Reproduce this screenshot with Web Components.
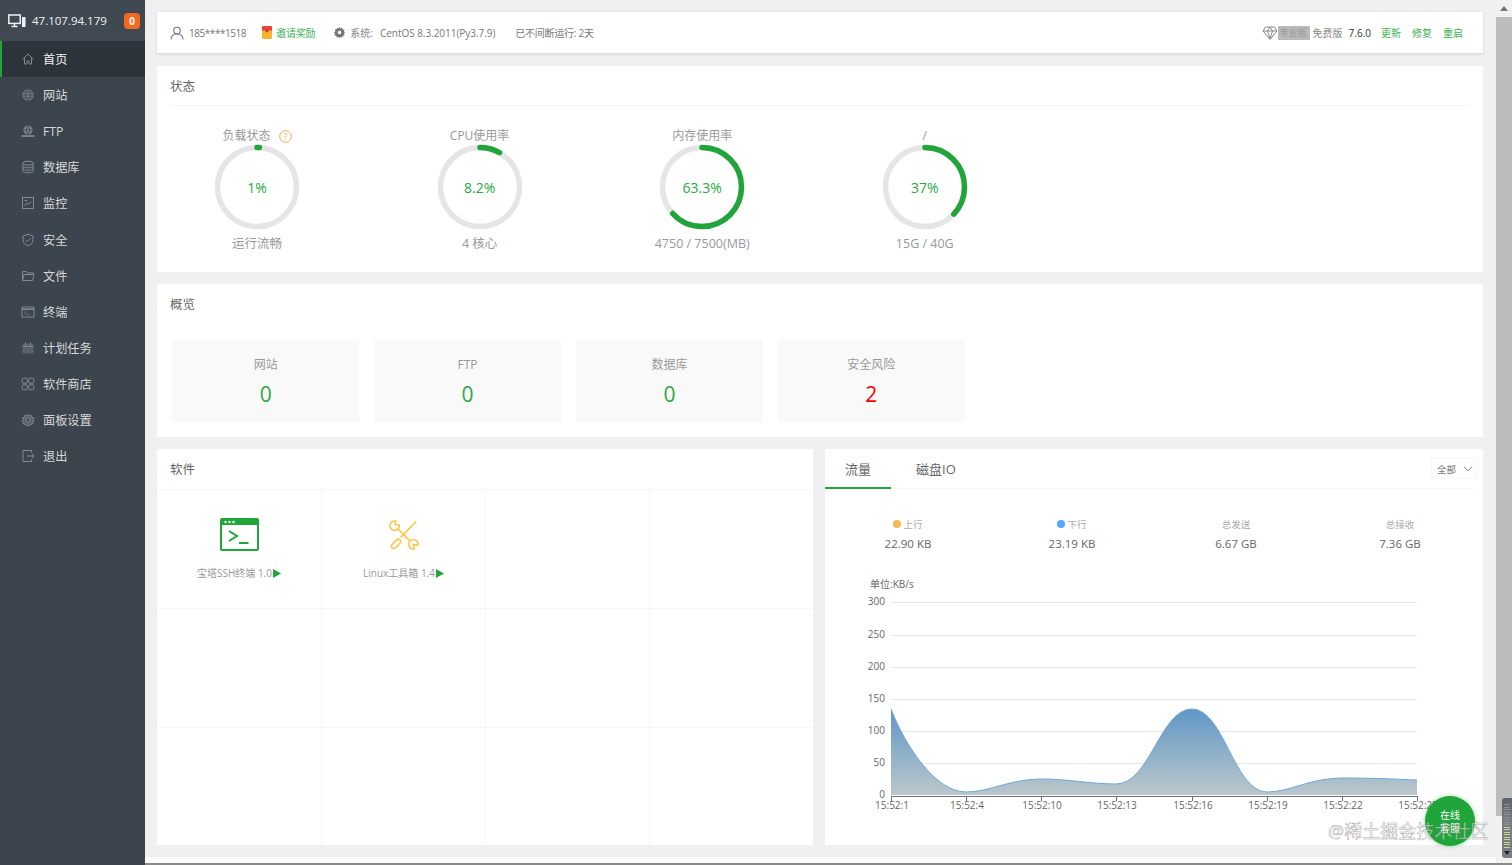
<!DOCTYPE html>
<html lang="zh">
<head>
<meta charset="utf-8">
<title>宝塔面板</title>
<style>
  html, body { margin: 0; height: 100%; overflow: hidden; }
  body {
    display: flex;
    height: 865px;
    background: #f0f0f0;
    font-family: "Open Sans", "Noto Sans CJK SC", sans-serif;
    color: #666;
    position: relative;
  }
</style>
</head>
<body>
<bt-sidebar>
  <bt-nav-item icon="home" active>首页</bt-nav-item>
  <bt-nav-item icon="globe">网站</bt-nav-item>
  <bt-nav-item icon="ftp">FTP</bt-nav-item>
  <bt-nav-item icon="db">数据库</bt-nav-item>
  <bt-nav-item icon="monitor">监控</bt-nav-item>
  <bt-nav-item icon="shield">安全</bt-nav-item>
  <bt-nav-item icon="folder">文件</bt-nav-item>
  <bt-nav-item icon="term">终端</bt-nav-item>
  <bt-nav-item icon="cal">计划任务</bt-nav-item>
  <bt-nav-item icon="apps">软件商店</bt-nav-item>
  <bt-nav-item icon="gear">面板设置</bt-nav-item>
  <bt-nav-item icon="exit">退出</bt-nav-item>
</bt-sidebar>

<bt-main>
  <bt-topbar></bt-topbar>

  <bt-card title="状态" style="height:206px">
    <bt-gauges>
      <bt-gauge label="负载状态" value="1" text="1%" sub="运行流畅" help></bt-gauge>
      <bt-gauge label="CPU使用率" value="8.2" text="8.2%" sub="4 核心"></bt-gauge>
      <bt-gauge label="内存使用率" value="63.3" text="63.3%" sub="4750 / 7500(MB)"></bt-gauge>
      <bt-gauge label="/" value="37" text="37%" sub="15G / 40G"></bt-gauge>
    </bt-gauges>
  </bt-card>

  <bt-card title="概览" plain style="height:153px">
    <bt-overview>
      <bt-stat label="网站" value="0"></bt-stat>
      <bt-stat label="FTP" value="0"></bt-stat>
      <bt-stat label="数据库" value="0"></bt-stat>
      <bt-stat label="安全风险" value="2" danger></bt-stat>
    </bt-overview>
  </bt-card>

  <bt-bottom>
    <bt-card title="软件" plain style="height:396px">
      <bt-soft-grid></bt-soft-grid>
    </bt-card>
    <bt-traffic></bt-traffic>
  </bt-bottom>
</bt-main>

<bt-scrollbar></bt-scrollbar>
<bt-float></bt-float>

<script>
const ICONS = {
  home: '<path d="M1.500 7.500 7 2l5.500 5.500M3.500 6v6h2.500V9h2v3h2.500V6"/>',
  globe: '<circle cx="7" cy="7" r="5.800" fill="#6f777f" stroke="none"/><path d="M1.500 7h11M2.500 4.200h9M2.500 9.800h9M7 1.500c-3.400 3.400-3.400 7.600 0 11M7 1.500c3.400 3.400 3.400 7.600 0 11" stroke="#3c444d" stroke-width=".7"/>',
  ftp: '<circle cx="7" cy="6" r="4.600" fill="#78808a" stroke="none"/><path d="M2.800 6h8.400M7 1.800c-2 2.400-2 6 0 8.400M7 1.800c2 2.400 2 6 0 8.400" stroke="#3c444d" stroke-width=".7"/><path d="M.5 12h13" stroke-width="1.300" stroke="#9aa0a6"/>',
  db: '<ellipse cx="7" cy="3.200" rx="5.200" ry="2"/><path d="M1.800 3.200v7.600c0 1.100 2.300 2 5.200 2s5.200-.9 5.200-2V3.200M1.800 5.800c0 1.100 2.300 2 5.200 2s5.200-.9 5.200-2M1.800 8.300c0 1.100 2.300 2 5.200 2s5.200-.9 5.200-2"/>',
  monitor: '<rect x="1.500" y="1.500" width="11" height="11"/><path d="M3.500 10 6 7l1.500 1.500L10 5.500M3.500 4.500h3"/>',
  shield: '<path d="M7 1.200 12 3v4c0 3-2.200 5-5 5.800C4.200 12 2 10 2 7V3z"/><path d="m4.600 6.800 1.800 1.800 3-3.200"/>',
  folder: '<path d="M1.500 11.500v-9h3.800l1.200 1.500h6v1.500M1.500 11.500l1.500-6h10l-1.500 6z"/>',
  term: '<rect x="1" y="2" width="12" height="10"/><path d="M1 4.200h12" stroke-width="1.600"/><path d="m3.500 6.500 1.500 1.300-1.500 1.300M6 9.500h2.500" stroke-width=".8"/>',
  cal: '<rect x="1.500" y="2.500" width="11" height="10" rx="1.500" fill="#59616a" stroke="none"/><path d="M1.500 5.500h11M4.500 1.500v3M9.500 1.500v3" stroke-width=".9"/>',
  apps: '<rect x="1.200" y="1.200" width="5" height="5" rx="1"/><rect x="7.800" y="1.200" width="5" height="5" rx="1"/><rect x="1.200" y="7.800" width="5" height="5" rx="1"/><rect x="7.800" y="7.800" width="5" height="5" rx="1"/>',
  gear: '<circle cx="7" cy="7" r="2"/><path fill="#59616a" d="M7 1.200 8.300 2.600l1.900-.4.500 1.900 1.900.6-.5 1.900L13 8l-1.400 1.100.1 1.900-1.900.2-1 1.600L7 12l-1.800.8-1-1.600-1.900-.2.100-1.900L1 8l1.200-1.400-.5-1.900 1.900-.6.500-1.900 1.900.4z"/><circle cx="7" cy="7" r="2" fill="#3c444d"/>',
  exit: '<path d="M10.500 3.500v-2H2v11h8.500v-2M6 7h7M11 5l2 2-2 2"/>'
};

customElements.define("bt-sidebar", class extends HTMLElement {
  connectedCallback() {
    if (this.shadowRoot)
      return;
    const shadow = this.attachShadow({ mode: 'open' });
    shadow.innerHTML = `
      <style>
        :host {
          display: block;
          flex: 0 0 145px;
          background: #3c444d;
          height: 865px;
        }
        header {
          height: 41px;
          box-sizing: border-box;
          padding: 0 5px 0 8px;
          display: flex;
          align-items: center;
          background: linear-gradient(#3f4750, #414952);
          color: #eef0f2;
          font-size: 11.500px;
        }
        svg { flex: none; margin-right: 6px; }
        span { flex: 1; }
        b {
          flex: none;
          width: 16px;
          height: 16px;
          line-height: 16px;
          border-radius: 4px;
          background: #f7671f;
          color: #fff;
          font-size: 10px;
          text-align: center;
        }
      </style>
      <header>
        <svg width="18" height="14" viewBox="0 0 18 14" fill="none" stroke="#eef0f2">
          <rect x=".8" y="1" width="11.400" height="8.400" stroke-width="1.500"/>
          <path d="M6.500 9.500v2.500M3.500 12.500h6" stroke-width="1.500"/>
          <rect x="14" y="3" width="3.500" height="10" fill="#eef0f2" stroke="none" rx=".5"/>
        </svg>
        <span>47.107.94.179</span>
        <b>0</b>
      </header>
      <nav><slot></slot></nav>
    `;
  }
});

customElements.define("bt-nav-item", class extends HTMLElement {
  connectedCallback() {
    if (this.shadowRoot)
      return;
    const shadow = this.attachShadow({ mode: 'open' });
    const icon = ICONS[this.getAttribute("icon")];
    shadow.innerHTML = `
      <style>
        :host {
          display: flex;
          align-items: center;
          gap: 8px;
          height: 36.100px;
          box-sizing: border-box;
          padding-left: 21px;
          color: #d6d9dc;
          font-size: 12.200px;
        }
        :host([active]) {
          background: #2d343b;
          box-shadow: inset 2px 0 #20a53a;
          color: #f2f3f4;
        }
        svg { flex: none; }
      </style>
      <svg width="14" height="14" viewBox="0 0 14 14" fill="none" stroke="#828990" stroke-width="1">${icon}</svg>
      <slot></slot>
    `;
  }
});

customElements.define("bt-main", class extends HTMLElement {
  connectedCallback() {
    if (this.shadowRoot)
      return;
    const shadow = this.attachShadow({ mode: 'open' });
    shadow.innerHTML = `
      <style>
        :host {
          flex: 1;
          min-width: 0;
          display: flex;
          flex-direction: column;
          gap: 12px;
          box-sizing: border-box;
          height: 865px;
          padding: 12px 13px 0 12px;
          background: linear-gradient(#f0f0f0 857px, #fbfbfb 857px, #fbfbfb 863px, #8a8a8a 863px);
        }
      </style>
      <slot></slot>
    `;
  }
});

customElements.define("bt-topbar", class extends HTMLElement {
  connectedCallback() {
    if (this.shadowRoot)
      return;
    const shadow = this.attachShadow({ mode: 'open' });
    shadow.innerHTML = `
      <style>
        :host {
          display: flex;
          align-items: center;
          flex: none;
          height: 41px;
          margin-bottom: 1px;
          box-sizing: border-box;
          padding: 0 20px 0 13px;
          background: #fff;
          box-shadow: 0 1px 3px rgba(0,0,0,.12);
          font-size: 10px;
          color: #777;
        }
        a { color: #3cb155; }
        svg { flex: none; }
        .sp { flex: 1; }
        .pro {
          width: 32px;
          height: 14px;
          line-height: 14px;
          background: #b9b9b9;
          color: #999;
          font-size: 9px;
          text-align: right;
          padding-right: 3px;
          box-sizing: border-box;
          border-radius: 1px;
        }
      </style>
      <svg width="14" height="14" viewBox="0 0 14 14" fill="none" stroke="#777" stroke-width="1.100">
        <circle cx="7" cy="4.500" r="3.300"/>
        <path d="M1 13.500c0-3.500 2.500-5.500 6-5.500s6 2 6 5.500"/>
      </svg>
      <span style="margin-left:5px;letter-spacing:-.45px">185****1518</span>
      <svg style="margin-left:16px" width="10" height="13" viewBox="0 0 10 13">
        <rect width="10" height="13" rx="1" fill="#f7b32b"/>
        <path d="M0 1a1 1 0 0 1 1-1h8a1 1 0 0 1 1 1v3.500H0z" fill="#e8413a"/>
        <circle cx="5" cy="5" r="1.400" fill="#c9312b"/>
      </svg>
      <a style="margin-left:4px;letter-spacing:-.2px">邀请奖励</a>
      <svg style="margin-left:19px" width="11" height="11" viewBox="0 0 14 14" fill="#777">
        <path d="M7 0l1.500 1.800 2.200-.8.500 2.300 2.300.500-.8 2.200L14 7l-1.300 1.500.8 2.200-2.300.5-.5 2.300-2.200-.8L7 14l-1.500-1.300-2.200.8-.5-2.300-2.300-.5.8-2.200L0 7l1.800-1.500L1 3.300l2.300-.5L3.800 1l1.700.800z"/>
        <circle cx="7" cy="7" r="2.200" fill="#fff"/>
      </svg>
      <span style="margin-left:5px;color:#888">系统:</span>
      <span style="margin-left:7px;letter-spacing:-.04px">CentOS 8.3.2011(Py3.7.9)</span>
      <span style="margin-left:20px;letter-spacing:-.25px">已不间断运行: 2天</span>
      <span class="sp"></span>
      <svg width="16" height="14" viewBox="0 0 16 14" fill="#fff" stroke="#888" stroke-width="1">
        <path d="M3.500 1h9L15 5l-7 8.500L1 5zM1 5h14M5.500 5 8 13l2.500-8M5.500 5l2.500-4 2.500 4"/>
      </svg>
      <span class="pro">专业版</span>
      <span style="margin-left:3px;color:#888">免费版</span>
      <span style="margin-left:6px;color:#333">7.6.0</span>
      <a style="margin-left:10px">更新</a>
      <a style="margin-left:11px">修复</a>
      <a style="margin-left:11px">重启</a>
    `;
  }
});

customElements.define("bt-card", class extends HTMLElement {
  connectedCallback() {
    if (this.shadowRoot)
      return;
    const shadow = this.attachShadow({ mode: 'open' });
    shadow.innerHTML = `
      <style>
        :host {
          display: flex;
          flex-direction: column;
          flex: none;
          background: #fff;
          box-sizing: border-box;
        }
        h3 {
          flex: none;
          height: 40px;
          line-height: 42px;
          margin: 0 12px;
          padding-left: 1px;
          font-size: 12.500px;
          font-weight: 400;
          color: #666;
          border-bottom: 1px solid #f5f5f5;
          box-sizing: border-box;
        }
        :host([plain]) h3 { border-bottom: 0; }
      </style>
      <h3>${this.getAttribute("title")}</h3>
      <slot></slot>
    `;
    this.removeAttribute("title");
  }
});

customElements.define("bt-gauges", class extends HTMLElement {
  connectedCallback() {
    if (this.shadowRoot)
      return;
    const shadow = this.attachShadow({ mode: 'open' });
    shadow.innerHTML = `
      <style>
        :host { display: flex; gap: 22.600px; padding-top: 21px; }
      </style>
      <slot></slot>
    `;
  }
});

customElements.define("bt-gauge", class extends HTMLElement {
  connectedCallback() {
    if (this.shadowRoot)
      return;
    const shadow = this.attachShadow({ mode: 'open' });
    const help = this.hasAttribute("help") ? `
      <svg width="13" height="13" viewBox="0 0 13 13">
        <circle cx="6.500" cy="6.500" r="5.800" fill="none" stroke="#f0ad4e"/>
        <text x="6.500" y="9.700" text-anchor="middle" font-size="9" fill="#f0ad4e">?</text>
      </svg>` : "";
    shadow.innerHTML = `
      <style>
        :host {
          display: flex;
          flex-direction: column;
          align-items: center;
          flex: 0 0 200px;
          font-size: 12px;
          color: #999;
        }
        .label { display: flex; align-items: center; gap: 8px; height: 18px; line-height: 18px; }
        .ring { position: relative; width: 86px; height: 86px; margin: -1px 0 4px; }
        .ring svg { display: block; }
        .val {
          position: absolute;
          inset: 0;
          display: flex;
          align-items: center;
          justify-content: center;
          color: #2aa946;
          font-size: 14px;
        }
        .sub { height: 18px; line-height: 18px; margin-top: 1px; font-size: 12.500px; }
      </style>
      <div class="label"><span>${this.getAttribute("label")}</span>${help}</div>
      <div class="ring">
        <svg width="86" height="86" viewBox="0 0 86 86" fill="none" stroke-width="5.500">
          <circle cx="43" cy="43" r="39.500" stroke="#e5e5e5"/>
          <circle cx="43" cy="43" r="39.500" stroke="#20a53a" stroke-linecap="round" pathLength="100"
            stroke-dasharray="${this.getAttribute("value")} 100" transform="rotate(-90 43 43)"/>
        </svg>
        <div class="val">${this.getAttribute("text")}</div>
      </div>
      <div class="sub">${this.getAttribute("sub")}</div>
    `;
  }
});

customElements.define("bt-overview", class extends HTMLElement {
  connectedCallback() {
    if (this.shadowRoot)
      return;
    const shadow = this.attachShadow({ mode: 'open' });
    shadow.innerHTML = `
      <style>
        :host { display: flex; gap: 14.600px; padding: 16px 0 0 15px; }
      </style>
      <slot></slot>
    `;
  }
});

customElements.define("bt-stat", class extends HTMLElement {
  connectedCallback() {
    if (this.shadowRoot)
      return;
    const shadow = this.attachShadow({ mode: 'open' });
    shadow.innerHTML = `
      <style>
        :host {
          display: flex;
          flex-direction: column;
          align-items: center;
          flex: 0 0 187.300px;
          height: 82px;
          box-sizing: border-box;
          padding-top: 16px;
          background: #f9f9f9;
          font-size: 12px;
          color: #999;
        }
        .label { height: 18px; line-height: 18px; }
        .num { font-size: 21px; line-height: 40px; color: #2aa946; }
        :host([danger]) .num { color: #f00; }
      </style>
      <div class="label">${this.getAttribute("label")}</div>
      <div class="num">${this.getAttribute("value")}</div>
    `;
  }
});

customElements.define("bt-bottom", class extends HTMLElement {
  connectedCallback() {
    if (this.shadowRoot)
      return;
    const shadow = this.attachShadow({ mode: 'open' });
    shadow.innerHTML = `
      <style>
        :host { display: grid; grid-template-columns: 656px 658px; gap: 12px; flex: none; }
      </style>
      <slot></slot>
    `;
  }
});

customElements.define("bt-soft-grid", class extends HTMLElement {
  connectedCallback() {
    if (this.shadowRoot)
      return;
    const shadow = this.attachShadow({ mode: 'open' });
    const ssh = `
      <svg width="39" height="33" viewBox="0 0 39 33">
        <rect x="1" y="1" width="37" height="31" rx="1" fill="#fff" stroke="#20a53a" stroke-width="2"/>
        <rect x="1" y="1" width="37" height="6" fill="#20a53a"/>
        <circle cx="5.500" cy="4" r="1.200" fill="#fff"/><circle cx="9.500" cy="4" r="1.200" fill="#fff"/><circle cx="13.500" cy="4" r="1.200" fill="#fff"/>
        <path d="m9 13 8 5-8 5M19 25h9.500" fill="none" stroke="#20a53a" stroke-width="2"/>
      </svg>`;
    const tools = `
      <svg width="30" height="30" viewBox="0 0 32 32" fill="none" stroke="#fdc74f" stroke-width="1.700">
        <path d="M29 1.500 12.500 18.500"/>
        <rect x="1.500" y="23" width="12" height="5" rx="2.500" transform="rotate(-45 7.500 25.500)"/>
        <path d="M9.500 9.500 22.500 22.500"/>
        <path d="M11 5.600A5 5 0 1 1 7.300 1.200L6.500 5z"/>
        <path d="M26.900 30.900A5 5 0 1 1 30.900 26.900L26 26z"/>
      </svg>`;
    const play = `<svg width="8" height="9" viewBox="0 0 8 9"><path d="M0 0l8 4.500L0 9z" fill="#20a53a"/></svg>`;
    shadow.innerHTML = `
      <style>
        :host {
          display: grid;
          grid-template-columns: 165px 164px 164px 163px;
          grid-template-rows: 119px 119px 118px;
          flex: none;
        }
        .cell {
          display: flex;
          flex-direction: column;
          align-items: center;
          border-right: 1px solid #f6f6f8;
          border-top: 1px solid #f6f6f8;
          box-sizing: border-box;
        }
        .cell:nth-of-type(4n) { border-right: 0; }
        .pic { height: 33px; margin-top: 28px; display: flex; align-items: center; }
        .name {
          margin-top: 15px;
          height: 14px;
          line-height: 14px;
          font-size: 10px;
          color: #999;
          display: flex;
          align-items: center;
          gap: 1px;
        }
      </style>
      <div class="cell"><div class="pic">${ssh}</div><div class="name">宝塔SSH终端 1.0${play}</div></div>
      <div class="cell"><div class="pic">${tools}</div><div class="name">Linux工具箱 1.4${play}</div></div>
      ${'<div class="cell"></div>'.repeat(10)}
    `;
  }
});

customElements.define("bt-traffic", class extends HTMLElement {
  connectedCallback() {
    if (this.shadowRoot)
      return;
    const shadow = this.attachShadow({ mode: 'open' });
    const ys = [[795, 0], [763, 50], [731, 100], [699, 150], [667, 200], [635, 250], [602, 300]];
    const grid = ys.slice(1).map(([y]) => `<path d="M891 ${y}.5H1417" stroke="#e6e6e6"/>`).join("");
    const ylabels = ys.map(([y, v]) => `<text x="885" y="${y + 3}" text-anchor="end">${v}</text>`).join("");
    const times = ["15:52:1", "15:52:4", "15:52:10", "15:52:13", "15:52:16", "15:52:19", "15:52:22", "15:52:25"];
    const xlabels = times.map((t, i) => {
      const x = Math.round(891 + i * 75.14);
      return `<path d="M${x}.5 796v5" stroke="#6e7079"/><text x="${x + 1}" y="809" text-anchor="middle">${t}</text>`;
    }).join("");
    const curve = "M891 709C905 745 935 792 966 792C990 792 1010 779 1041 779C1070 779 1090 784 1116 784C1150 784 1160 709 1192 709C1224 709 1234 792 1267 792C1290 792 1310 778 1342 778C1370 778 1395 779 1417 780";
    shadow.innerHTML = `
      <style>
        :host {
          display: flex;
          flex-direction: column;
          height: 396px;
          background: #fff;
        }
        .tabs {
          position: relative;
          display: flex;
          flex: none;
          height: 40px;
          margin-right: 6px;
          border-bottom: 1px solid #f7f7f7;
          box-sizing: border-box;
          font-size: 13px;
          color: #666;
        }
        .tab { width: 66px; text-align: center; line-height: 40px; height: 40px; box-sizing: border-box; }
        .tab.on { border-bottom: 2px solid #20a53a; }
        .tab + .tab { width: auto; margin-left: 25px; }
        .select {
          position: absolute;
          right: 0;
          top: 9px;
          width: 46px;
          height: 21px;
          box-sizing: border-box;
          border: 1px solid #f8f8f8;
          display: flex;
          align-items: center;
          padding-left: 5px;
          gap: 7px;
          font-size: 9.500px;
          color: #777;
        }
        .stats {
          display: grid;
          grid-template-columns: repeat(4, 164px);
          padding: 27px 0 0 1px;
          flex: none;
          text-align: center;
        }
        .k { font-size: 9.500px; color: #aaa; height: 18px; line-height: 18px; }
        .k i {
          display: inline-block;
          width: 8px;
          height: 8px;
          border-radius: 50%;
          margin-right: 2px;
        }
        .v { font-size: 11.500px; color: #666; height: 20px; line-height: 20px; }
        svg.chart { flex: none; position: absolute; left: 825px; top: 489px; }
        svg text { font-family: "Open Sans", "Noto Sans CJK SC", sans-serif; font-size: 10px; fill: #666; }
      </style>
      <div class="tabs">
        <div class="tab on">流量</div>
        <div class="tab">磁盘IO</div>
        <div class="select">全部
          <svg width="10" height="6" viewBox="0 0 10 6" fill="none" stroke="#777"><path d="m1 .8 4 4 4-4"/></svg>
        </div>
      </div>
      <div class="stats">
        <div><div class="k"><i style="background:#f7b851"></i>上行</div><div class="v">22.90 KB</div></div>
        <div><div class="k"><i style="background:#52a9ff"></i>下行</div><div class="v">23.19 KB</div></div>
        <div><div class="k">总发送</div><div class="v">6.67 GB</div></div>
        <div><div class="k">总接收</div><div class="v">7.36 GB</div></div>
      </div>
      <svg class="chart" width="658" height="356" viewBox="825 489 658 356" fill="none">
        <defs>
          <linearGradient id="area" gradientUnits="userSpaceOnUse" x1="0" y1="709" x2="0" y2="795">
            <stop offset="0" stop-color="#6097c6"/>
            <stop offset="1" stop-color="#bbc7ca"/>
          </linearGradient>
        </defs>
        <text x="870" y="588">单位:KB/s</text>
        ${grid}
        ${ylabels}
        <path d="${curve}L1417 795L891 795Z" fill="url(#area)"/>
        <path d="${curve}" stroke="#6fa8dc" stroke-width="1"/>
        <path d="M891 796.500H1417" stroke="#6e7079"/>
        ${xlabels}
      </svg>
    `;
  }
});

customElements.define("bt-scrollbar", class extends HTMLElement {
  connectedCallback() {
    if (this.shadowRoot)
      return;
    const shadow = this.attachShadow({ mode: 'open' });
    shadow.innerHTML = `
      <style>
        :host {
          display: flex;
          flex-direction: column;
          flex: 0 0 16px;
          height: 865px;
          background: linear-gradient(#f1f1f1 863px, #8a8a8a 863px);
          position: relative;
        }
        .up { flex: none; height: 17px; display: flex; align-items: center; justify-content: center; }
        .thumb { flex: none; height: 799px; background: #bcbcbc; }
        .meter {
          position: absolute;
          left: 6px;
          top: 798px;
          width: 10px;
          height: 60px;
          border-radius: 3px 0 0 3px;
          background: linear-gradient(#5b6168, #777d83 40%, #777d83);
          box-sizing: border-box;
          padding: 6px 2px 10px;
          display: flex;
          flex-direction: column;
          justify-content: space-between;
        }
        .meter i { display: block; height: 1px; background: #8b9096; }
        .meter i.g { background: #c9d98a; }
        .down {
          position: absolute;
          left: 2px;
          bottom: 3px;
          border: 3.500px solid transparent;
          border-top: 4px solid #222;
          border-bottom: 0;
        }
      </style>
      <div class="up">
        <svg width="8" height="5" viewBox="0 0 8 5"><path d="M4 0l4 5H0z" fill="#777"/></svg>
      </div>
      <div class="thumb"></div>
      <div class="meter">
        ${'<i></i>'.repeat(9)}${'<i class="g"></i>'.repeat(9)}
        <span class="down"></span>
      </div>
    `;
  }
});

customElements.define("bt-float", class extends HTMLElement {
  connectedCallback() {
    if (this.shadowRoot)
      return;
    const shadow = this.attachShadow({ mode: 'open' });
    shadow.innerHTML = `
      <style>
        :host { display: block; position: absolute; left: 0; top: 0; width: 0; height: 0; }
        .btn {
          position: absolute;
          left: 1425px;
          top: 796px;
          width: 50px;
          height: 50px;
          border-radius: 50%;
          background: #20a53a;
          box-shadow: 0 0 4px rgba(32,165,58,.5);
          color: #fff;
          font-size: 10px;
          line-height: 13px;
          text-align: center;
          padding-top: 13px;
          box-sizing: border-box;
        }
        .mark {
          position: absolute;
          left: 1328px;
          top: 819px;
          white-space: nowrap;
          font-size: 18px;
          line-height: 25px;
          color: rgba(255,255,255,.55);
          -webkit-text-stroke: .5px rgba(105,105,105,.6);
        }
      </style>
      <div class="btn">在线<br>客服</div>
      <div class="mark">@稀土掘金技术社区</div>
    `;
  }
});
</script>
</body>
</html>
